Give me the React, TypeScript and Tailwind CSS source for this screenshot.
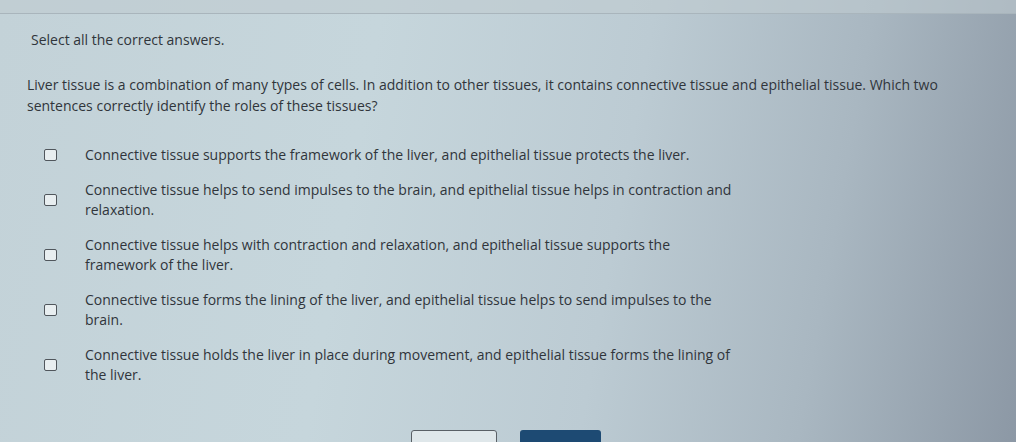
import React from 'react';

const options = [
  'Connective tissue supports the framework of the liver, and epithelial tissue protects the liver.',
  'Connective tissue helps to send impulses to the brain, and epithelial tissue helps in contraction and relaxation.',
  'Connective tissue helps with contraction and relaxation, and epithelial tissue supports the framework of the liver.',
  'Connective tissue forms the lining of the liver, and epithelial tissue helps to send impulses to the brain.',
  'Connective tissue holds the liver in place during movement, and epithelial tissue forms the lining of the liver.',
];

export default function App() {
  return (
    <div
      className="relative w-[1016px] h-[442px] overflow-hidden bg-[linear-gradient(100deg,#c3d2d8_0%,#c6d6dc_35%,#bccbd3_60%,#a9b7c1_80%,#8c98a5_100%)] text-[#30353b]"
      style={{ fontFamily: '"Open Sans", "Noto Sans", sans-serif' }}
    >
      <div className="h-[14px] border-b border-[#a9b5bc] bg-[#bfcbd1]/60" />
      <div className="pl-[31px] pt-[16px]">
        <p className="text-[14px] leading-[20px] font-medium">Select all the correct answers.</p>
        <p className="mt-[24px] text-[14px] leading-[21px] font-medium w-[930px] -ml-[4px]">
          Liver tissue is a combination of many types of cells. In addition to other tissues, it contains connective tissue and epithelial tissue. Which two sentences correctly identify the roles of these tissues?
        </p>
        <div className="mt-[29px] flex flex-col gap-[14px] pl-[13px]">
          {options.map((o, i) => (
            <div key={i} className="flex items-center gap-[28px]">
              <span className="w-[13px] h-[12px] shrink-0 rounded-[2px] border-[1.5px] border-[#50565c] bg-[#e8eef0]" />
              <p className="text-[14px] leading-[20.5px] font-medium w-[650px]">{o}</p>
            </div>
          ))}
        </div>
        <div className="mt-[44px] flex gap-[23px] pl-[380px]">
          <button className="w-[86px] h-[30px] rounded-[3px] border-[1.5px] border-[#5a6066] bg-[#dfe7ea]" />
          <button className="w-[81px] h-[30px] rounded-[3px] bg-[#1d4a73]" />
        </div>
      </div>
    </div>
  );
}
